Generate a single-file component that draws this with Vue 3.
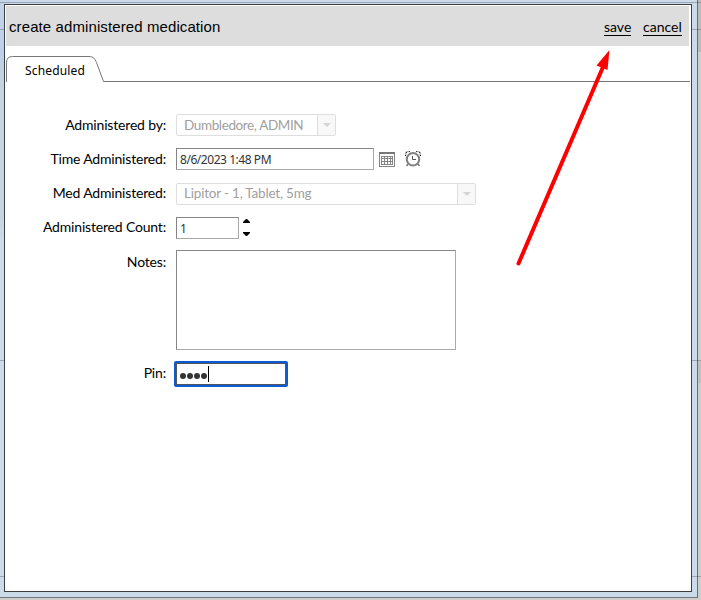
<script setup>
import { ref } from 'vue'
const time = ref('8/6/2023 1:48 PM')
const count = ref('1')
const notes = ref('')
</script>

<template>
  <div class="backdrop">
    <i class="seam s1"></i><i class="seam s2"></i><i class="seam s3"></i><i class="seam s4"></i>
    <div class="window">
      <section class="dialog">
        <header class="title-bar">
          <h1>create administered medication</h1>
          <nav><a class="save">save</a><a class="cancel">cancel</a></nav>
        </header>
        <div class="tabs">
          <svg class="tab-edge" width="684" height="27" viewBox="0 0 684 27">
            <path d="M.5 26V6.5Q.5 .5 6.5 .5H83C87.5 .5 89 3 90.5 6.5L97.5 25.5H684" fill="none" stroke="#777" />
          </svg>
          <span>Scheduled</span>
        </div>
        <form class="form" @submit.prevent>
          <div class="row">
            <label>Administered by:</label>
            <div class="combo by"><span class="value v1">Dumbledore, ADMIN</span><span class="drop"><svg width="8" height="4"><path d="M0 0H8L4 4Z" fill="#d4d4d4" /></svg></span></div>
          </div>
          <div class="row r2">
            <label>Time Administered:</label>
            <input v-model="time" class="field time" />
            <svg class="calendar" width="16" height="15" viewBox="0 0 16 15">
              <rect x=".5" y=".5" width="15" height="14" fill="#fff" stroke="#858585" />
              <path d="M0 1H16" stroke="#777" stroke-width="2" />
              <rect x="2" y="4" width="12" height="9" fill="#858585" />
              <path d="M3 5h2v1H3zM6 5h2v1H6zM9 5h2v1H9zM12 5h1v1h-1zM3 7h2v2H3zM6 7h2v2H6zM9 7h2v2H9zM12 7h1v2h-1zM3 10h2v2H3zM6 10h2v2H6zM9 10h2v2H9zM12 10h1v2h-1z" fill="#fff" />
            </svg>
            <svg class="clock" width="16" height="16" viewBox="0 0 16 16" fill="none">
              <path d="M.8 4.4V1.5L2 .7H5M15.2 4.4V1.5L14 .7H11" stroke="#aaa" stroke-width="1.3" />
              <path d="M3 13L1.5 15M13 13l1.5 2" stroke="#777" stroke-width="1.5" />
              <path d="M1 1.5h1M14 1.5h1M4 .5h1M11 .5h1M0 4.5h1M15 4.5h1" stroke="#333" />
              <circle cx="8" cy="8.3" r="6.2" fill="#fff" stroke="#808080" stroke-width="2" />
              <path d="M7.5 4.8V8.5H11" stroke="#555" />
            </svg>
          </div>
          <div class="row r3">
            <label>Med Administered:</label>
            <div class="combo med"><span class="value v2">Lipitor - 1, Tablet, 5mg</span><span class="drop"><svg width="8" height="4"><path d="M0 0H8L4 4Z" fill="#d4d4d4" /></svg></span></div>
          </div>
          <div class="row r4">
            <label>Administered Count:</label>
            <input v-model="count" class="field count" />
            <span class="spinner">
              <svg width="7" height="4"><path d="M0 4V3L3 0H4L7 3V4Z" /></svg>
              <svg width="7" height="4"><path d="M0 0V1L3 4H4L7 1V0Z" /></svg>
            </span>
          </div>
          <div class="row r5">
            <label>Notes:</label>
            <textarea v-model="notes" class="field notes"></textarea>
          </div>
          <div class="row r6">
            <label>Pin:</label>
            <div class="pin"><i v-for="n in 4" :key="n" class="dot"></i><b class="caret"></b></div>
          </div>
        </form>
      </section>
    </div>
    <svg class="arrow" width="110" height="230" viewBox="510 40 110 230">
      <path d="M518.5 263.5L603 67" stroke="#f00" stroke-width="4" stroke-linecap="round" />
      <path d="M609.5 50L596.5 65.5L607.5 70Z" fill="#f00" />
    </svg>
  </div>
</template>

<style>
body { margin: 0; overflow: hidden; }
</style>

<style scoped>
* { box-sizing: border-box; }
.backdrop { position: relative; width: 701px; height: 600px; overflow: hidden; background: linear-gradient(#bcbcbc 0 52px, #cfcfcf 52px 361px, #c1c1c1 361px 383px, #cecece 383px); }
.window { width: 698px; height: 598px; padding: 4px 6px 5px 4px; border-right: 1px solid #666f78; border-bottom: 1px solid #777; background: linear-gradient(90deg, transparent 0 10px, #cbdbea 10px), linear-gradient(#c3d4e7, #bdd0e8 50px, #c4d5df 85px 215px, #cbdbea 240px); }
.dialog { position: relative; z-index: 1; width: 688px; height: 588px; padding: 1px 2px 1px 1px; border: 1px solid #3b3e42; background: #fff; font-family: Lato, "Noto Sans", sans-serif; font-size: 14px; color: #000; }
.title-bar { display: flex; align-items: center; justify-content: space-between; height: 40px; padding: 0 7px 0 3px; background: #ddd; }
h1 { margin: 2px 0 0; font: 15px/20px "Liberation Sans", Arial, sans-serif; letter-spacing: .1px; white-space: nowrap; }
nav { display: flex; gap: 12px; margin-top: 1px; }
nav a { height: 18px; line-height: 18px; border-bottom: 1px solid #000; white-space: nowrap; }
.save { width: 27px; }
.cancel { width: 39px; }
.tabs { display: grid; height: 27px; margin-top: 10px; width: 684px; }
.tab-edge, .tabs span { grid-area: 1 / 1; }
.tabs span { padding: 5px 0 0 19px; font: 12px/20px "Noto Sans", sans-serif; letter-spacing: .15px; }
.form { padding-top: 31px; }
.row { display: flex; height: 22px; align-items: flex-start; }
.r2, .r4 { margin-top: 12px; }
.r3 { margin-top: 13px; }
.r5 { margin-top: 11px; height: 100px; }
.r6 { margin-top: 11px; height: 26px; }
label { width: 160px; margin-right: 10px; text-align: right; line-height: 22px; letter-spacing: -.18px; white-space: nowrap; }
.r3 label, .r4 label { line-height: 20px; }
.r5 label, .r6 label { line-height: 24px; }
.combo { display: flex; height: 22px; border: 1px solid #dedede; border-radius: 2px; color: #a0a0a0; }
.by { width: 160px; }
.med { width: 300px; }
.value { flex: 1; padding-left: 7px; font-size: 13.5px; line-height: 20px; white-space: nowrap; }
.v1 { letter-spacing: -.38px; }
.v2 { letter-spacing: -.2px; }
.r3 .value { line-height: 19px; }
.drop { display: flex; width: 18px; align-items: center; justify-content: center; border-left: 1px solid #dedede; background: #f8f8f8; }
.field { margin: 0; height: 22px; border: 1px solid #aaa; border-color: #858585 #aaa #aaa #858585; border-radius: 0; outline: 0; background: #fff; color: #333; font: 12px "Noto Sans", sans-serif; padding: 0 3px; }
.time { width: 198px; letter-spacing: -.45px; }
.count { width: 63px; }
.notes { width: 280px; height: 100px; resize: none; }
.calendar { margin: 4px 0 0 5px; }
.clock { margin: 3px 0 0 10px; }
.spinner { display: flex; flex-direction: column; gap: 9px; margin: 2px 0 0 4px; }
.spinner svg { display: block; }
.pin { display: flex; width: 114px; height: 26px; margin-left: -2px; padding: 4px 4px; align-items: flex-start; border: 2px solid #0a5cd6; border-radius: 2px; box-shadow: inset 0 0 0 1px #555; }
.dot { width: 6px; height: 6px; margin: 6px 1px 0 0; border-radius: 50%; background: #333; }
.caret { width: 1px; height: 16px; margin-top: -1px; background: #000; }
.seam { position: absolute; left: 0; width: 701px; height: 1px; background: rgba(60, 70, 80, .35); }
.s1 { top: 2px; } .s2 { top: 29px; } .s3 { top: 360px; } .s4 { top: 576px; }
.arrow { position: absolute; z-index: 2; left: 510px; top: 40px; }
</style>
